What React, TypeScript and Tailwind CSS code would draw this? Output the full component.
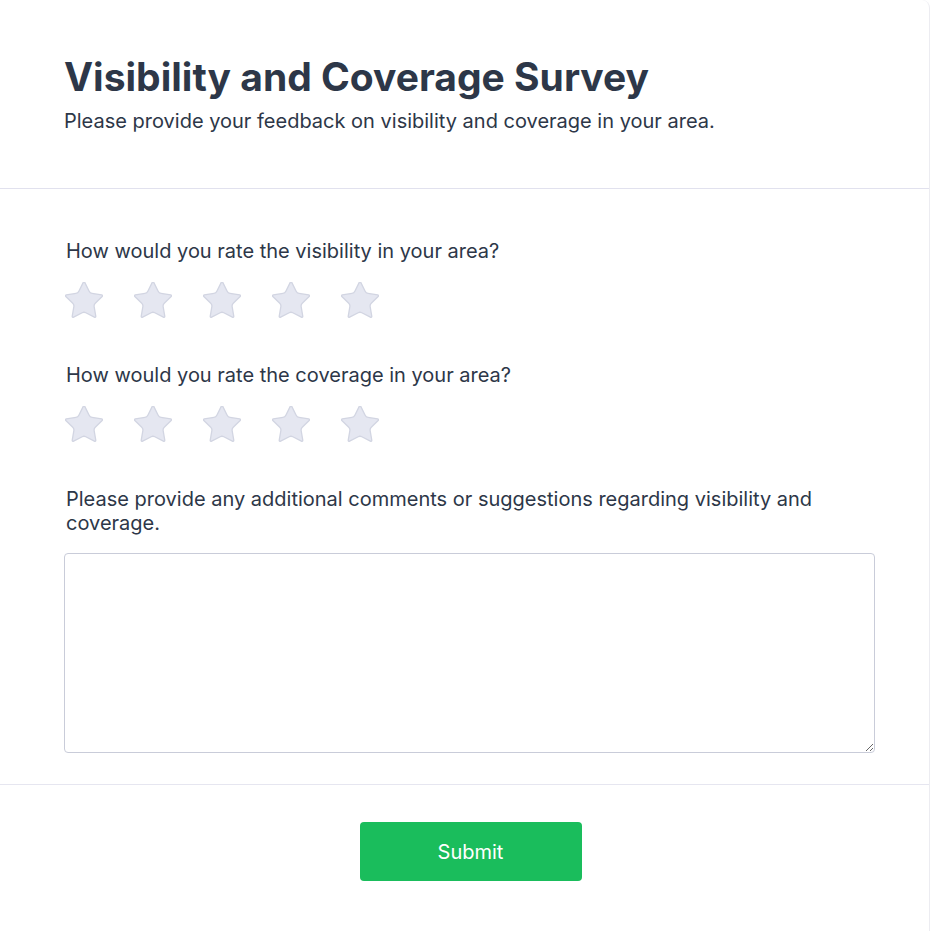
import * as React from "react";

const StarIcon = () => (
  <svg
    viewBox="1.85 1.95 20.3 19.5"
    className="h-[36px] w-[38px]"
    fill="#e5e7f1"
    stroke="#d2d5e2"
    strokeWidth={0.7}
    strokeLinejoin="round"
  >
    <path d="M11.525 2.295a.53.53 0 0 1 .95 0l2.31 4.679a2.123 2.123 0 0 0 1.595 1.16l5.166.756a.53.53 0 0 1 .294.904l-3.736 3.638a2.123 2.123 0 0 0-.611 1.878l.882 5.14a.53.53 0 0 1-.771.56l-4.618-2.428a2.122 2.122 0 0 0-1.973 0L6.396 21.01a.53.53 0 0 1-.77-.56l.881-5.139a2.122 2.122 0 0 0-.611-1.879L2.16 9.795a.53.53 0 0 1 .294-.906l5.165-.755a2.122 2.122 0 0 0 1.597-1.16z" />
  </svg>
);

const Rating = ({ label }: { label: string }) => (
  <div className="flex flex-col">
    <label className="ml-[2px] text-xl leading-6">{label}</label>
    <div className="mt-[19px] flex gap-[31px] pl-px">
      {[1, 2, 3, 4, 5].map((n) => (
        <button key={n} type="button" aria-label={`${n} star`} className="block">
          <StarIcon />
        </button>
      ))}
    </div>
  </div>
);

export default function App() {
  return (
    <div className="min-h-[931px] w-[930px] bg-white font-['Inter',sans-serif] text-[#2d3748]">
      <div className="min-h-[931px] rounded-tr-lg border-r border-[#ececf1]">
        <div className="pt-[57px] pb-[53px] pl-16 pr-[54px]">
          <h1 className="text-[39px] leading-10 font-bold">
            Visibility and Coverage Survey
          </h1>
          <p className="mt-[10px] text-xl leading-7">
            Please provide your feedback on visibility and coverage in your area.
          </p>
        </div>

        <div className="border-t border-[#e1e1ee] pt-[50px] pb-[31px] pl-16 pr-[54px]">
          <div className="flex flex-col gap-[45px]">
            <Rating label="How would you rate the visibility in your area?" />
            <Rating label="How would you rate the coverage in your area?" />
            <div className="flex flex-col">
              <label className="ml-[2px] text-xl leading-6">
                Please provide any additional comments or suggestions regarding
                visibility and coverage.
              </label>
              <textarea className="mt-[18px] h-[200px] w-full rounded border border-[#c9ccd9] p-2 outline-none" />
            </div>
          </div>
        </div>

        <div className="flex justify-center border-t border-[#e6e6f0] pt-[37px] pb-[50px] pl-3">
          <button
            type="button"
            className="h-[59px] w-[222px] rounded bg-[#1abd5c] text-xl text-white"
          >
            Submit
          </button>
        </div>
      </div>
    </div>
  );
}
